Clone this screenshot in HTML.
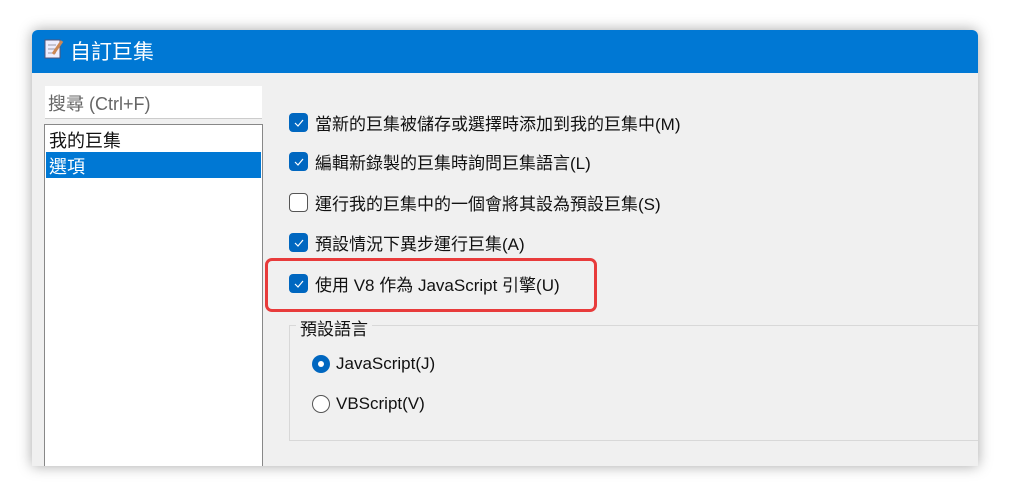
<html><head><style>
body{margin:0;width:1009px;height:496px;background:#fff;position:relative;overflow:hidden;font-family:"Segoe UI","Liberation Sans","Noto Sans CJK TC",sans-serif;}
.win{position:absolute;left:32px;top:30px;width:946px;height:436px;background:#f0f0f0;box-shadow:0 0 14px rgba(0,0,0,.35);border-radius:6px 6px 0 0;overflow:hidden}
.title{position:absolute;left:0;top:0;width:946px;height:43px;background:#0078d4;color:#fff;font-size:21px;}
.t{position:absolute;white-space:nowrap;font-size:17px;color:#111}
.cb{position:absolute;left:257px;width:19px;height:19px;border-radius:4px;background:#0067c0}
.cb.off{background:#fff;border:1px solid #555;box-sizing:border-box;border-radius:4px}
.cb svg{position:absolute;left:5px;top:6px}
</style></head><body>
<div class="win">
<div class="title">
<svg style="position:absolute;left:12px;top:8px" width="20" height="22"><rect x="1" y="2" width="15" height="18" fill="#eef" stroke="#557" stroke-width="1"/><line x1="4" y1="7" x2="12" y2="7" stroke="#99a"/><line x1="4" y1="11" x2="12" y2="11" stroke="#99a"/><line x1="4" y1="15" x2="12" y2="15" stroke="#99a"/><line x1="9" y1="16" x2="18" y2="3" stroke="#c85" stroke-width="3"/></svg>
<span style="position:absolute;left:38px;top:6px">自訂巨集</span></div>
<div style="position:absolute;left:13px;top:56px;width:217px;height:32px;background:#fff;border-bottom:1px solid #ccc"></div>
<div class="t" style="left:16px;top:60px;color:#666;font-size:18px">搜尋 (Ctrl+F)</div>
<div style="position:absolute;left:12px;top:94px;width:217px;height:345px;background:#fff;border:1px solid #888"></div>
<div style="position:absolute;left:14px;top:122px;width:215px;height:26px;background:#0078d4"></div>
<div class="t" style="left:17px;top:97px;font-size:18px">我的巨集</div>
<div class="t" style="left:17px;top:123px;font-size:18px;color:#fff">選項</div>

<div class="cb" style="top:83px"><svg width="10" height="8"><path d="M1 4l3 3 5-6" stroke="#fff" fill="none" stroke-width="1.2"/></svg></div>
<div class="t" style="left:283px;top:80px">當新的巨集被儲存或選擇時添加到我的巨集中(M)</div>
<div class="cb" style="top:122px"><svg width="10" height="8"><path d="M1 4l3 3 5-6" stroke="#fff" fill="none" stroke-width="1.2"/></svg></div>
<div class="t" style="left:283px;top:119px">編輯新錄製的巨集時詢問巨集語言(L)</div>
<div class="cb off" style="top:163px"></div>
<div class="t" style="left:283px;top:160px">運行我的巨集中的一個會將其設為預設巨集(S)</div>
<div class="cb" style="top:203px"><svg width="10" height="8"><path d="M1 4l3 3 5-6" stroke="#fff" fill="none" stroke-width="1.2"/></svg></div>
<div class="t" style="left:283px;top:200px">預設情況下異步運行巨集(A)</div>
<div style="position:absolute;left:233px;top:228px;width:326px;height:48px;border:3px solid #e83b3b;border-radius:7px"></div>
<div class="cb" style="top:244px"><svg width="10" height="8"><path d="M1 4l3 3 5-6" stroke="#fff" fill="none" stroke-width="1.2"/></svg></div>
<div class="t" style="left:283px;top:241px">使用 V8 作為 JavaScript 引擎(U)</div>

<div style="position:absolute;left:257px;top:295px;width:700px;height:114px;border:1px solid #d8d8d8"></div>
<div class="t" style="left:264px;top:285px;background:#f0f0f0;padding:0 4px">預設語言</div>
<div style="position:absolute;left:280px;top:325px;width:18px;height:18px;border-radius:50%;background:#0067c0"><div style="position:absolute;left:6px;top:6px;width:6px;height:6px;border-radius:50%;background:#fff"></div></div>
<div class="t" style="left:304px;top:324px">JavaScript(J)</div>
<div style="position:absolute;left:280px;top:365px;width:18px;height:18px;border-radius:50%;border:1px solid #555;box-sizing:border-box;background:#fff"></div>
<div class="t" style="left:304px;top:364px">VBScript(V)</div>
</div>
</body></html>
